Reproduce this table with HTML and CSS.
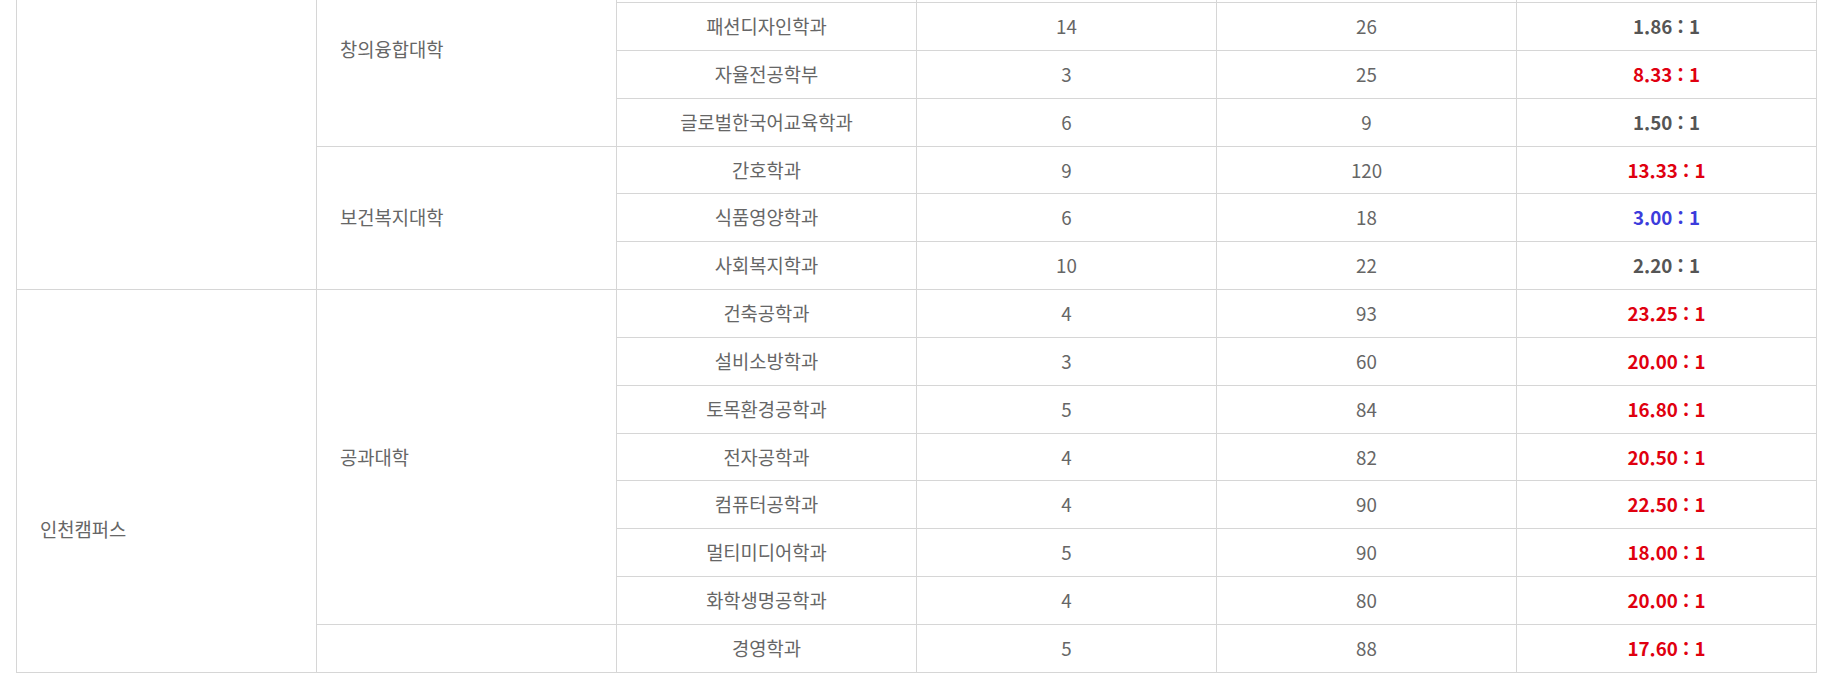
FILE: index.html
```html
<!DOCTYPE html>
<html lang="ko">
<head>
    <meta charset="UTF-8">
    <meta name="viewport" content="width=device-width, initial-scale=1.0">
    <title>모집단위별 경쟁률</title>
    <link rel="stylesheet" href="styles.css">
</head>
<body>
    <div class="화면">
        <table class="경쟁률표">
            <colgroup>
                <col class="칸"><col class="칸"><col class="칸"><col class="칸"><col class="칸"><col class="칸">
            </colgroup>
            <tbody>
                <!-- 위쪽은 스크롤로 잘린 부분: 앞 행의 끝만 보임 -->
                <tr class="꼬리">
                    <td rowspan="7"></td>
                    <td rowspan="4" class="왼쪽 위로">창의융합대학</td>
                    <td></td><td></td><td></td><td></td>
                </tr>
                <tr><td>패션디자인학과</td><td>14</td><td>26</td><td class="비율">1.86 : 1</td></tr>
                <tr><td>자율전공학부</td><td>3</td><td>25</td><td class="비율 높음">8.33 : 1</td></tr>
                <tr><td>글로벌한국어교육학과</td><td>6</td><td>9</td><td class="비율">1.50 : 1</td></tr>
                <tr>
                    <td rowspan="3" class="왼쪽">보건복지대학</td>
                    <td>간호학과</td><td>9</td><td>120</td><td class="비율 높음">13.33 : 1</td>
                </tr>
                <tr><td>식품영양학과</td><td>6</td><td>18</td><td class="비율 중간">3.00 : 1</td></tr>
                <tr><td>사회복지학과</td><td>10</td><td>22</td><td class="비율">2.20 : 1</td></tr>

                <!-- 인천캠퍼스 -->
                <tr>
                    <td rowspan="8" class="왼쪽 캠퍼스">인천캠퍼스</td>
                    <td rowspan="7" class="왼쪽">공과대학</td>
                    <td>건축공학과</td><td>4</td><td>93</td><td class="비율 높음">23.25 : 1</td>
                </tr>
                <tr><td>설비소방학과</td><td>3</td><td>60</td><td class="비율 높음">20.00 : 1</td></tr>
                <tr><td>토목환경공학과</td><td>5</td><td>84</td><td class="비율 높음">16.80 : 1</td></tr>
                <tr><td>전자공학과</td><td>4</td><td>82</td><td class="비율 높음">20.50 : 1</td></tr>
                <tr><td>컴퓨터공학과</td><td>4</td><td>90</td><td class="비율 높음">22.50 : 1</td></tr>
                <tr><td>멀티미디어학과</td><td>5</td><td>90</td><td class="비율 높음">18.00 : 1</td></tr>
                <tr><td>화학생명공학과</td><td>4</td><td>80</td><td class="비율 높음">20.00 : 1</td></tr>
                <tr class="마지막">
                    <td></td>
                    <td>경영학과</td><td>5</td><td>88</td><td class="비율 높음">17.60 : 1</td>
                </tr>
            </tbody>
        </table>
    </div>
</body>
</html>
```

FILE: styles.css
```css
body
{
    margin: 0;
    background-color: #fff;
    font-family: "Noto Sans CJK KR", "Noto Sans", sans-serif;
    font-size: 18.75px;
    color: #666;
}
.화면
{
    height: 673px;
    overflow: hidden;
    padding-left: 16px;
}
.경쟁률표
{
    width: 1801px;
    border-collapse: collapse;
    table-layout: fixed;
}
.칸
{
    width: 300px;
}
.경쟁률표 td
{
    border: 1px solid #d6d6d6;
    padding: 12px 10px;
    line-height: 22.85px;
    text-align: center;
    vertical-align: middle;
    white-space: nowrap;
}
.경쟁률표 td.왼쪽
{
    text-align: left;
    padding-left: 23px;
}
/* 화면 위로 잘린 행 */
.꼬리 td
{
    border-top: none;
    height: 2px;
    padding-top: 0;
    padding-bottom: 0;
    line-height: 0;
}
.꼬리 td.위로
{
    vertical-align: top;
    padding-top: 38px;
    line-height: 22.85px;
}
/* 아래로 이어지는 캠퍼스 칸 */
.경쟁률표 td.캠퍼스
{
    vertical-align: top;
    padding-top: 228px;
}
.마지막 td
{
    border-bottom: 1px solid #d6d6d6;
}
.비율
{
    font-weight: bold;
    color: #555;
}
.비율.높음
{
    color: #e0000f;
}
.비율.중간
{
    color: #3c3cdc;
}
```
